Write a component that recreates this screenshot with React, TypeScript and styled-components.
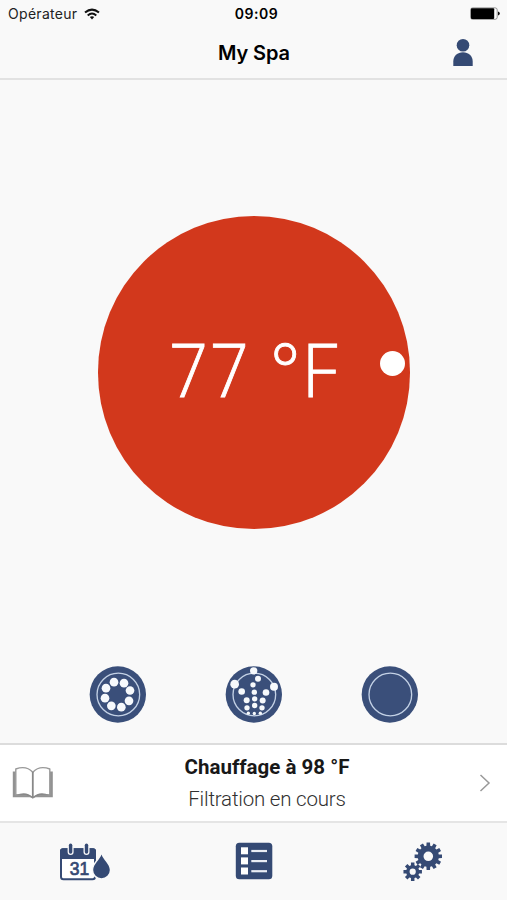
import React from "react";
import styled, { createGlobalStyle } from "styled-components";

const NAVY = "#354a74";

const Global = createGlobalStyle`
  * { box-sizing: border-box; }
  body { margin: 0; background: #f9f9f9; }
  svg { display: block; flex: none; }
`;

const Screen = styled.div`
  display: flex;
  flex-direction: column;
  width: 507px;
  height: 900px;
  overflow: hidden;
  background: #f9f9f9;
  color: #000;
  font-family: Inter, sans-serif;
`;

const Header = styled.header`
  height: 80px;
  border-bottom: 2px solid #e2e2e2;
`;

const StatusBar = styled.div`
  display: grid;
  grid-template-columns: 1fr auto 1fr;
  align-items: center;
  height: 27px;
  padding: 0 7px 0 8px;
`;

const Carrier = styled.div`
  display: flex;
  align-items: center;
  gap: 7px;
  font-size: 14px;
  letter-spacing: 0.3px;
  color: #222;
`;

const Clock = styled.div`
  padding-left: 5px;
  font-size: 14px;
  font-weight: 600;
  letter-spacing: 0.5px;
`;

const Battery = styled.div`
  justify-self: end;
`;

const NavBar = styled.div`
  display: grid;
  grid-template-columns: 1fr auto 1fr;
  align-items: center;
  height: 52px;
  padding: 0 34px;
`;

const Title = styled.h1`
  grid-column: 2;
  margin: 0;
  padding-left: 1px;
  font-size: 20px;
  font-weight: 600;
  line-height: 48px;
  letter-spacing: -0.1px;
`;

const Profile = styled.div`
  justify-self: end;
`;

const Main = styled.main`
  display: flex;
  flex-direction: column;
  align-items: center;
  justify-content: space-between;
  height: 663px;
  padding: 136px 0 20px;
`;

const Dial = styled.div`
  position: relative;
  display: flex;
  align-items: center;
  justify-content: center;
  width: 312.5px;
  height: 312.5px;
  border-radius: 50%;
  margin-left: 1px;
  background: #d2381c;
`;

const Temperature = styled.div`
  display: flex;
  gap: 13px;
  padding: 0 0 7px 3px;
  color: #fff;
  font: 300 74px/90px "Open Sans", sans-serif;
  -webkit-text-stroke: 0.9px #fff;
`;

const Digits = styled.span`
  letter-spacing: 2px;
  transform: scaleX(0.92);
  transform-origin: left;
`;

const Unit = styled.span`
  letter-spacing: 1.5px;
  transform: scaleX(0.96);
  transform-origin: left;
`;

const Knob = styled.div`
  position: absolute;
  top: 135px;
  left: 282.5px;
  width: 25px;
  height: 25px;
  border-radius: 50%;
  background: #fff;
`;

const Controls = styled.div`
  display: flex;
  gap: 79px;
`;

const StatusRow = styled.section`
  display: grid;
  grid-template-columns: 42px 1fr 42px;
  align-items: center;
  height: 80px;
  padding: 0 12px;
  border-top: 2px solid #dcdcdc;
  border-bottom: 2px solid #e5e5e5;
  background: #fff;
`;

const Messages = styled.div`
  display: flex;
  flex-direction: column;
  align-items: center;
  padding-left: 27px;
  font-family: Roboto, sans-serif;
  font-size: 20.5px;
  line-height: 32px;
  font-variant-ligatures: none;
`;

const Heating = styled.div`
  font-weight: 700;
  color: #181818;
`;

const Filtering = styled.div`
  font-weight: 300;
  letter-spacing: -0.2px;
  color: #303030;
`;

const Chevron = styled.div`
  justify-self: end;
  padding-right: 4px;
`;

const TabBar = styled.nav`
  display: grid;
  grid-template-columns: repeat(3, 1fr);
  justify-items: center;
  height: 77px;
  padding-top: 19px;
`;

type Dot = [number, number, number];

const WHIRL: Dot[] = [
  [102, 82, 13], [132, 85, 13], [150, 107, 13], [147, 138, 13],
  [124, 157, 13], [94, 153, 13], [75, 130, 13], [78, 100, 13],
];

const JETS: Dot[] = [
  [113, 48, 11], [126, 72, 9], [56, 88, 13], [174, 96, 12], [111, 90, 8],
  [77, 110, 10], [150, 113, 10], [115, 112, 8], [92, 136, 9], [140, 137, 9],
  [116, 132, 8], [93, 159, 8], [116, 152, 8], [138, 159, 8],
  [97, 175, 5], [115, 176, 5], [133, 175, 5],
];

function SpaButton({ dots }: { dots: Dot[] }) {
  return (
    <svg width="57" height="57" viewBox="27 33.5 171 171">
      <circle cx="113.5" cy="119" r="84.5" fill="#3a4f7a" />
      <circle cx="115" cy="119" r="64" fill="none" stroke="#c3d1e5" strokeWidth="4" />
      {dots.map(([x, y, r]) => (
        <circle key={`${x}-${y}`} cx={x} cy={y} r={r} fill="#f6f9fc" />
      ))}
    </svg>
  );
}

function gear(cx: number, cy: number, teeth: number, outer: number, root: number, hole: number) {
  const step = (Math.PI * 2) / teeth;
  const points: string[] = [];
  for (let i = 0; i < teeth; i++) {
    const a = i * step;
    const corners = [[-0.34, root], [-0.24, outer], [0.24, outer], [0.34, root]];
    for (const [t, r] of corners) {
      points.push(`${(cx + r * Math.sin(a + t * step)).toFixed(2)} ${(cy - r * Math.cos(a + t * step)).toFixed(2)}`);
    }
  }
  return `M${points.join("L")}Z M${cx - hole} ${cy}a${hole} ${hole} 0 1 0 ${hole * 2} 0a${hole} ${hole} 0 1 0 ${-hole * 2} 0Z`;
}

const CalendarIcon = () => (
  <svg width="52" height="40" viewBox="59 841 52 40">
    <rect x="61" y="848.3" width="34" height="30" rx="2.5" fill="#fff" stroke={NAVY} strokeWidth="2" />
    <path d="M60 858v-8q0-2.700 2.700-2.700h30.600q2.700 0 2.700 2.700v8Z" fill={NAVY} />
    {[70.6, 86.5].map((x) => (
      <g key={x} strokeLinecap="round">
        <path d={`M${x} 844.800v6.200`} stroke="#f9f9f9" strokeWidth="6" />
        <path d={`M${x} 844.300v6.700`} stroke={NAVY} strokeWidth="3.400" />
      </g>
    ))}
    <text x="79.500" y="873.800" textAnchor="middle" fontFamily="Liberation Sans, sans-serif" fontSize="17.500" fill={NAVY} stroke={NAVY} strokeWidth="0.700">31</text>
    <path d="M101.500 853.400c1.700 5.300 8.300 9.500 8.300 15.600a8.300 8.300 0 0 1-16.600 0c0-6.100 6.600-10.300 8.300-15.600Z" fill={NAVY} stroke="#f9f9f9" strokeWidth="3" paintOrder="stroke" />
  </svg>
);

const ListIcon = () => (
  <svg width="38" height="38" viewBox="235 842 38 38">
    <rect x="235.800" y="842.700" width="36.500" height="36.500" rx="3.500" fill={NAVY} />
    {[850.8, 860.9, 871].map((y) => (
      <g key={y}>
        <rect x="241" y={y - 3.5} width="7" height="7" fill="#fff" />
        <path d={`M251.300 ${y + 0.2}H267`} stroke="#e9edf4" strokeWidth="2.200" />
      </g>
    ))}
  </svg>
);

const GearsIcon = () => (
  <svg width="41" height="41" viewBox="402 841 41 41">
    <path fillRule="evenodd" fill={NAVY} d={gear(428.3, 855.3, 12, 13.8, 10.6, 4.8)} />
    <path fillRule="evenodd" fill={NAVY} d={gear(412.7, 870.7, 8, 9.4, 6.6, 3.1)} />
  </svg>
);

const WifiIcon = () => (
  <svg width="16" height="12" viewBox="0 0 16 12">
    <g fill="none" stroke="#111" strokeWidth="2">
      <path d="M1 4.600Q8-1.400 15 4.600" />
      <path d="M3.700 7.400Q8 3.700 12.300 7.400" />
    </g>
    <path d="M5.800 9.100Q8 7.500 10.200 9.100L8 11.400Z" fill="#111" />
  </svg>
);

const BatteryIcon = () => (
  <svg width="30" height="13" viewBox="0 0 30 13">
    <rect x="0.600" y="0.900" width="26.600" height="11.400" rx="2" fill="#fff" stroke="#777" strokeWidth="0.800" />
    <rect x="1" y="1.200" width="23.200" height="10.800" rx="1" fill="#000" />
    <path d="M28 4.500q1.800 0.500 1.800 2t-1.800 2Z" fill="#111" />
  </svg>
);

const PersonIcon = () => (
  <svg width="20" height="28" viewBox="0 0 20 28">
    <circle cx="10" cy="6.300" r="6.300" fill={NAVY} />
    <path d="M0.300 27v-4.600C0.300 17 4.500 13.300 10 13.300s9.700 3.700 9.700 9.100v4.600Z" fill={NAVY} />
  </svg>
);

const BookIcon = () => (
  <svg width="42" height="34" viewBox="12 766 42 34">
    <path d="M12.800 771.500h3v23.500q9.500-1 17 2.200q7.500-3.200 17-2.200v-23.500h3v25.800H35q-2.200 2.200-4.400 0H12.800Z" fill="#929292" />
    <path d="M15.800 769q10.500-3.800 17 3.200q6.500-7 17-3.200v26q-10.500-1.500-17 2.700q-6.500-4.200-17-2.700Z" fill="#fff" stroke="#999" strokeWidth="1.400" strokeLinejoin="round" />
    <path d="M16 795q10-4.500 16.800 2q6.800-6.500 16.800-2q-10-1-16.800 3q-6.800-4-16.800-3Z" fill="#888" />
    <path d="M32.800 772v25" stroke="#888" strokeWidth="1.800" />
  </svg>
);

export default function App() {
  return (
    <Screen>
      <Global />
      <Header>
        <StatusBar>
          <Carrier>Opérateur<WifiIcon /></Carrier>
          <Clock>09:09</Clock>
          <Battery><BatteryIcon /></Battery>
        </StatusBar>
        <NavBar>
          <Title>My Spa</Title>
          <Profile><PersonIcon /></Profile>
        </NavBar>
      </Header>
      <Main>
        <Dial>
          <Temperature><Digits>77</Digits><Unit>°F</Unit></Temperature>
          <Knob />
        </Dial>
        <Controls>
          <SpaButton dots={WHIRL} />
          <SpaButton dots={JETS} />
          <SpaButton dots={[]} />
        </Controls>
      </Main>
      <StatusRow>
        <BookIcon />
        <Messages>
          <Heating>Chauffage à 98 °F</Heating>
          <Filtering>Filtration en cours</Filtering>
        </Messages>
        <Chevron>
          <svg width="12" height="18" viewBox="0 0 12 18">
            <path d="M1.500 1L10 9l-8.500 8" fill="none" stroke="#999" strokeWidth="1.500" />
          </svg>
        </Chevron>
      </StatusRow>
      <TabBar>
        <CalendarIcon />
        <ListIcon />
        <GearsIcon />
      </TabBar>
    </Screen>
  );
}
